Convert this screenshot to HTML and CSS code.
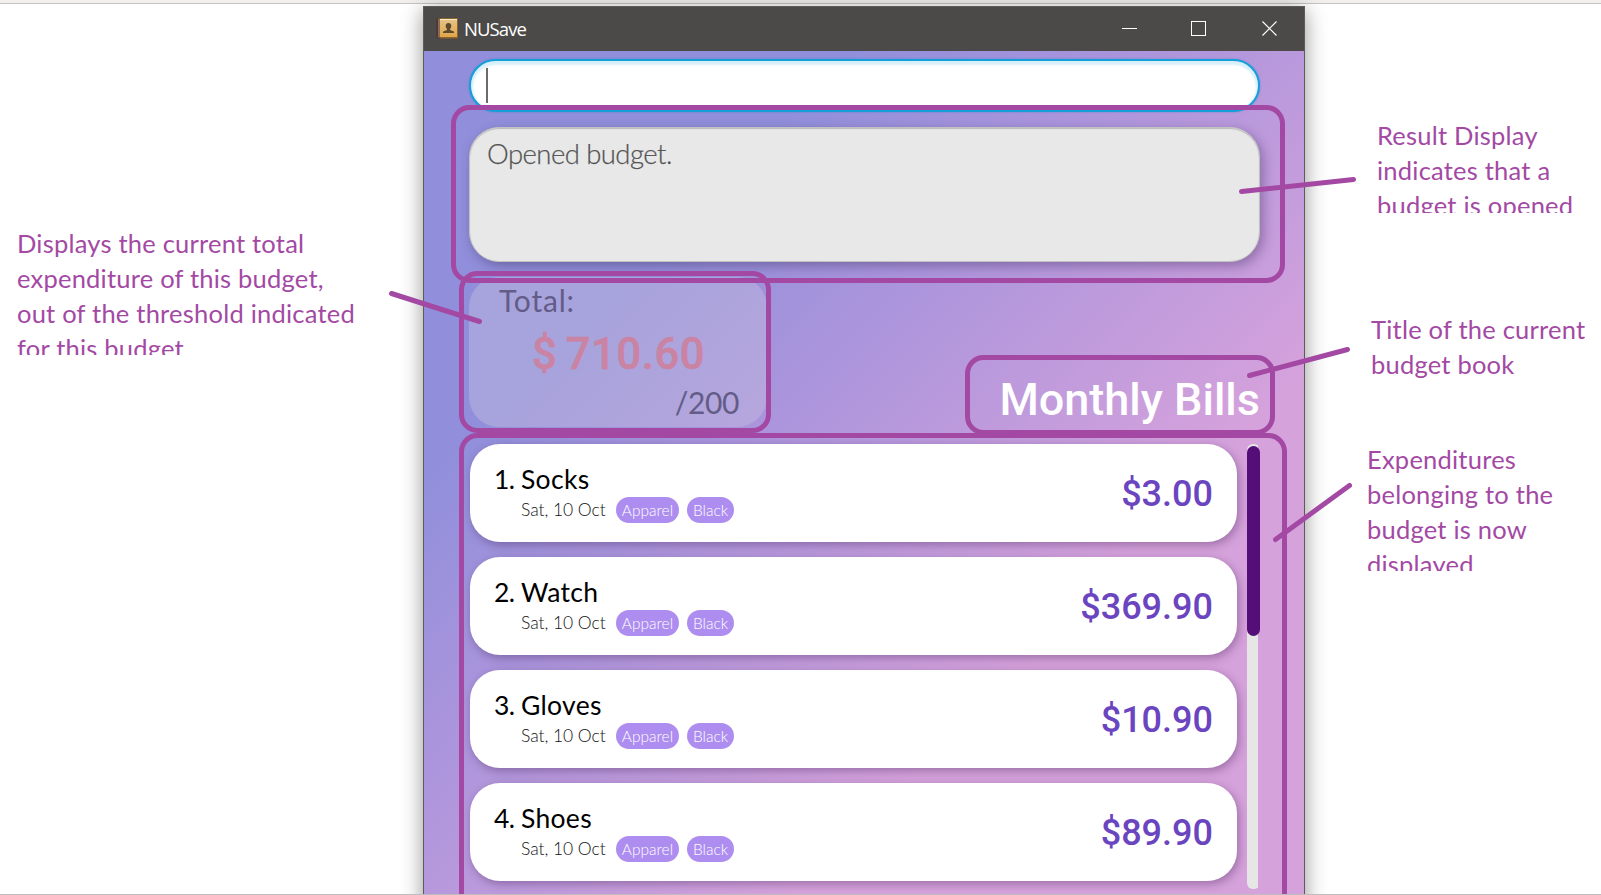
FILE: index.html
```html
<!DOCTYPE html>
<html lang="en">
<head>
<meta charset="utf-8">
<title>NUSave</title>
<link rel="stylesheet" href="styles.css">
</head>
<body>
<div class="stage">
  <div class="toolbar-edge"></div>
  <main class="window">
    <header class="titlebar">
      <svg class="app-icon" width="22" height="21" viewBox="0 0 22 21">
        <defs><linearGradient id="cover" x1="0" y1="0" x2="0" y2="1"><stop offset="0" stop-color="#e6c489"/><stop offset="1" stop-color="#dfa64a"/></linearGradient></defs>
        <rect x="0" y="0" width="5" height="20.5" rx="1.5" fill="#4f3a35"/>
        <rect x="2" y="0.5" width="2" height="19" fill="#8a6a55"/>
        <rect x="4" y="0" width="18" height="20.5" rx="1" fill="#8d6428"/>
        <rect x="4" y="1" width="17" height="18" fill="url(#cover)"/>
        <rect x="4" y="1" width="17" height="1" fill="#fbe9c8"/>
        <path d="M12.500 5c1.800 0 2.800 1.200 2.800 2.900 0 1.300-.6 2.300-1.300 2.900v1.300l3.400 1.100c.5.200.7.700.7 1.800H7c0-1.100.2-1.600.7-1.800l3.300-1.100v-1.300c-.7-.6-1.300-1.600-1.300-2.900C9.700 6.200 10.700 5 12.500 5z" fill="#5d4a2c"/>
      </svg>
      <span class="app-name">NUSave</span>
      <svg class="controls" width="156" height="17" viewBox="0 0 156 17" fill="none" stroke="#fff">
        <path d="M0 8.500h15"/>
        <rect x="69.500" y="1.500" width="14" height="14"/>
        <path d="M140.500 1.500l14 14M154.500 1.500l-14 14" stroke-width="1.200"/>
      </svg>
    </header>
    <div class="content">
      <div class="command"><span class="caret"></span></div>
      <div class="result">Opened budget.</div>
      <div class="summary">
        <section class="total">
          <div class="total-label">Total:</div>
          <div class="total-value">$ 710.60</div>
          <div class="total-limit">/200</div>
        </section>
        <h1 class="budget-title">Monthly Bills</h1>
      </div>
      <div class="list">
        <div class="cards">
          <article class="card"><span class="index">1.</span><div class="info"><div class="name">Socks</div><div class="meta"><span class="date">Sat, 10 Oct</span><span class="tag apparel">Apparel</span><span class="tag black">Black</span></div></div><div class="price">$3.00</div></article>
          <article class="card"><span class="index">2.</span><div class="info"><div class="name">Watch</div><div class="meta"><span class="date">Sat, 10 Oct</span><span class="tag apparel">Apparel</span><span class="tag black">Black</span></div></div><div class="price">$369.90</div></article>
          <article class="card"><span class="index">3.</span><div class="info"><div class="name">Gloves</div><div class="meta"><span class="date">Sat, 10 Oct</span><span class="tag apparel">Apparel</span><span class="tag black">Black</span></div></div><div class="price">$10.90</div></article>
          <article class="card"><span class="index">4.</span><div class="info"><div class="name">Shoes</div><div class="meta"><span class="date">Sat, 10 Oct</span><span class="tag apparel">Apparel</span><span class="tag black">Black</span></div></div><div class="price">$89.90</div></article>
        </div>
        <div class="scrollbar"><div class="thumb"></div></div>
      </div>
    </div>
  </main>
  <svg class="marks" width="1601" height="895" viewBox="0 0 1601 895">
    <rect x="453.500" y="107.500" width="829" height="173" rx="16"/>
    <rect x="461.500" y="273.500" width="307" height="157" rx="16"/>
    <rect x="967.500" y="357.500" width="305" height="75" rx="16"/>
    <rect x="461.500" y="435.500" width="823" height="500" rx="16"/>
    <path d="M391.500 293.500L479.500 321.500M1241.500 191.500L1353.500 179.500M1249.500 375.500L1347.500 349.500M1275.500 539.500L1349.500 485.500"/>
  </svg>
  <p class="note note-total">Displays the current total<br>expenditure of this budget,<br>out of the threshold indicated<br>for this budget</p>
  <p class="note note-result">Result Display<br>indicates that a<br>budget is opened</p>
  <p class="note note-title">Title of the current<br>budget book</p>
  <p class="note note-list">Expenditures<br>belonging to the<br>budget is now<br>displayed</p>
</div>
</body>
</html>
```
FILE: styles.css
```css
* { box-sizing: border-box; }
body { margin: 0; background: #fff; font-family: Lato, sans-serif; }
.stage { position: relative; width: 1601px; height: 895px; overflow: hidden; border-bottom: 1px solid #bdbdbd; }
.toolbar-edge { height: 4px; background: #f1f0ef; border-bottom: 1px solid #c6c4c2; }
.window { width: 882px; height: 920px; margin: 2px 0 0 423px; border: 1px solid #5c5b58; box-shadow: 0 4px 20px rgba(0, 0, 0, .42); display: flex; flex-direction: column; }
.titlebar { height: 44px; flex: none; background: #4c4a48; display: flex; align-items: center; padding: 0 26px 0 12px; }
.app-icon { margin-top: -2px; }
.app-name { font: 18.500px "Open Sans", sans-serif; color: #fff; margin: -1px 0 0 6px; letter-spacing: -.9px; flex: 1; }
.controls { margin-top: -1px; }
.content { flex: 1; padding: 8px 44px 0 45px; background: linear-gradient(135deg, #918fdb 304px, #ac95dc 513px, #d6a2dc 859px); }
.command { height: 53px; border: 2px solid #149fd9; border-radius: 27px; background: #fff; box-shadow: inset 0 2px 2px 2px #d9f0fa, 0 0 2px rgba(20, 120, 210, .5); padding: 7px 0 0 15px; }
.caret { display: block; width: 2px; height: 35px; background: #6b6b6b; }
.result { height: 135px; margin-top: 15px; border: 1px solid #c2c2c2; border-radius: 30px; background: #e8e8e8; box-shadow: inset 0 1px 1px #b8b8b8, 3px 4px 12px rgba(45, 25, 75, .36); padding: 9px 17px; font-size: 27.500px; font-weight: 300; line-height: 34px; letter-spacing: -.55px; color: #505050; -webkit-text-stroke: .25px #606060; }
.summary { display: flex; justify-content: space-between; align-items: flex-end; height: 150px; margin-top: 15px; }
.total { width: 298px; height: 150px; border-radius: 30px; background: rgba(200, 192, 222, .4); padding: 5px 28px 0 30px; color: #635c87; font-size: 30px; line-height: 36px; }
.total-label { letter-spacing: .8px; }
.total-value { font: 500 43.500px/52px Roboto, sans-serif; color: #ca83a3; -webkit-text-stroke: .5px #ca83a3; padding-left: 33px; margin-top: 11px; letter-spacing: .6px; word-spacing: -3px; white-space: nowrap; }
.total-limit { text-align: right; margin-top: 3px; letter-spacing: -.4px; }
.budget-title { margin: 0; font: 500 45px/54px Roboto, sans-serif; color: #fff; }
.list { display: flex; justify-content: space-between; margin: 17px 0 0 1px; }
.cards { width: 767px; display: flex; flex-direction: column; gap: 15px; }
.card { height: 98px; border-radius: 30px; background: #fff; box-shadow: 2px 3px 10px rgba(60, 25, 80, .38); display: flex; padding: 18px 24px 0 24px; }
.index, .name { font-size: 26.500px; line-height: 35px; color: #000; }
.name { letter-spacing: .3px; }
.index { width: 27px; letter-spacing: -.5px; white-space: nowrap; }
.info { flex: 1; }
.meta { display: flex; align-items: center; height: 26px; }
.date { width: 95px; margin-top: -2px; font-size: 17.500px; font-weight: 300; letter-spacing: -.05px; color: #111; white-space: nowrap; }
.tag { height: 26px; border-radius: 13px; background: #ae8df0; color: #fff; font-size: 15.500px; font-weight: 300; line-height: 27px; text-align: center; }
.apparel { width: 63px; margin-right: 8px; }
.black { width: 47px; }
.price { font: 500 36px/64px Roboto, sans-serif; color: #6b44bf; }
.scrollbar { width: 13px; height: 445px; background: linear-gradient(90deg, #e6e6e6 11px, transparent 11px); border-radius: 6px; padding-top: 2px; }
.thumb { height: 190px; border-radius: 7px; background: #550e78; }
.marks { position: absolute; inset: 0; fill: none; stroke: #a349a4; stroke-width: 5; stroke-linecap: round; }
.note { position: absolute; margin: 0; color: #a349a4; font-size: 25.500px; line-height: 35px; letter-spacing: .22px; white-space: nowrap; overflow: hidden; }
.note-total { left: 17px; top: 226px; height: 129px; }
.note-result { left: 1377px; top: 118px; height: 95px; }
.note-title { left: 1371px; top: 312px; height: 71px; }
.note-list { left: 1367px; top: 442px; height: 129px; }
```
